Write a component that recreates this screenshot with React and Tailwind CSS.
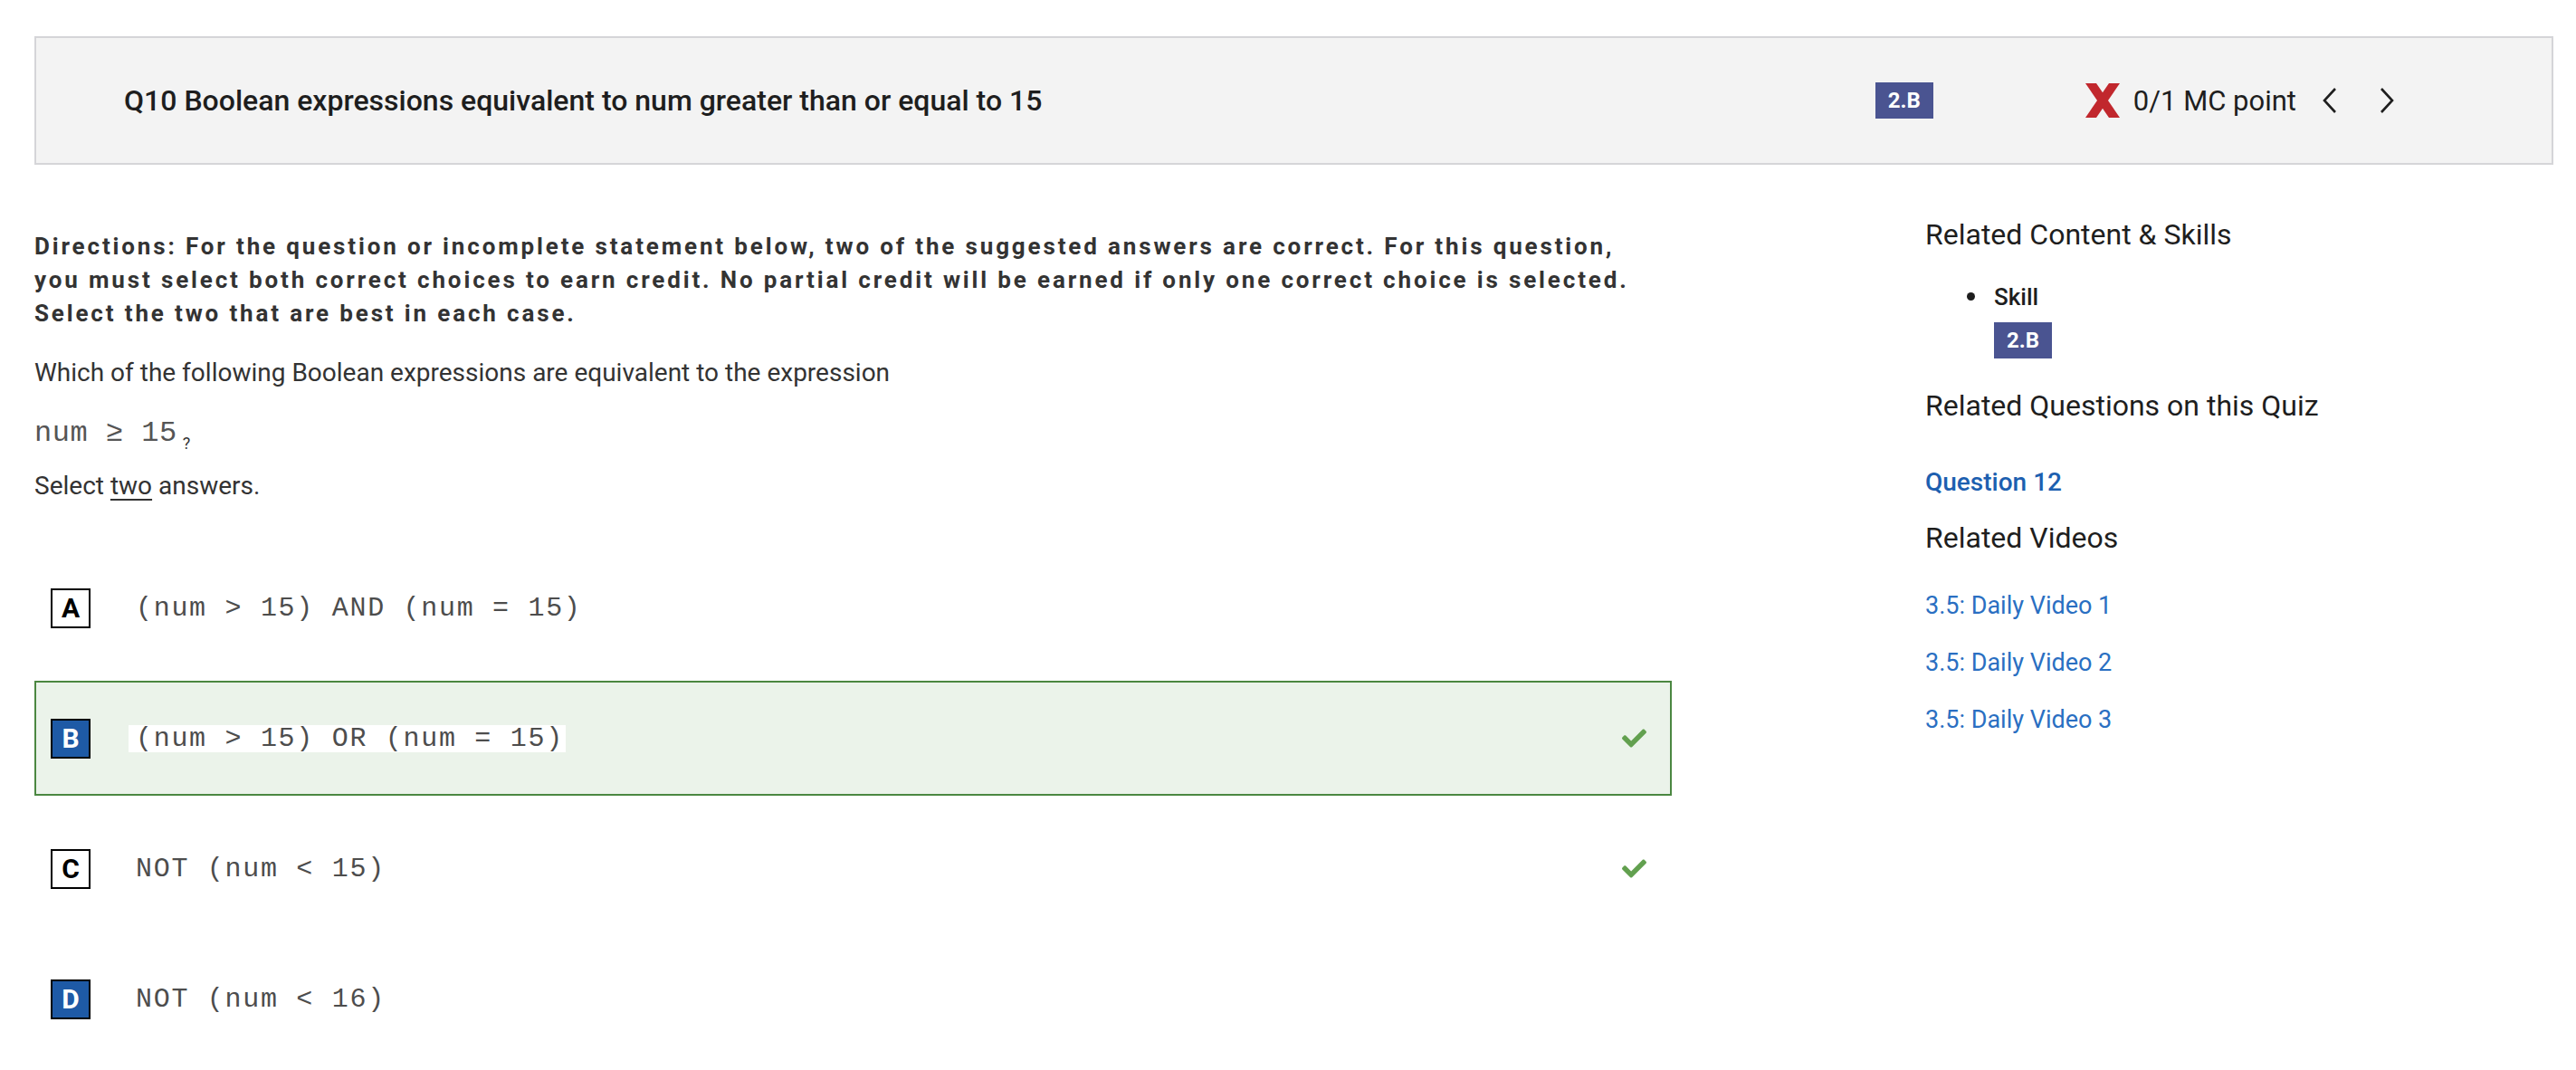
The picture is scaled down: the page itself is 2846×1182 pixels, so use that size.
import React from "react";
import { FaCheck } from "react-icons/fa";

function XMark() {
  return (
    <svg width="40" height="38" viewBox="0 0 40 38" aria-hidden="true">
      <polygon points="1,0 13,0 39,38 27,38" fill="#c1272d" />
      <polygon points="27,0 39,0 13,38 1,38" fill="#c1272d" />
    </svg>
  );
}

function Chevron({ left, className }) {
  return (
    <svg width="20" height="30" viewBox="0 0 20 30" className={className} aria-hidden="true">
      <polyline
        points={left ? "16,2 4,15 16,28" : "4,2 16,15 4,28"}
        fill="none"
        stroke="#1e1e1e"
        strokeWidth="2.6"
      />
    </svg>
  );
}

const options = [
  { letter: "A", text: "(num > 15) AND (num = 15)", filled: false, selected: false, check: false },
  { letter: "B", text: "(num > 15) OR (num = 15)", filled: true, selected: true, check: true },
  { letter: "C", text: "NOT (num < 15)", filled: false, selected: false, check: true },
  { letter: "D", text: "NOT (num < 16)", filled: true, selected: false, check: false },
];

function Option({ o }) {
  return (
    <div
      className={
        "flex h-[127px] items-center border-2 pl-[16px] pr-[26px] " +
        (o.selected ? "border-[#4b8741] bg-[#ebf3ea]" : "border-transparent bg-white")
      }
    >
      <span
        className={
          "flex h-[44px] w-[44px] shrink-0 items-center justify-center border-2 border-black text-[30px] font-bold leading-none " +
          (o.filled ? "bg-[#1e5aa6] text-white" : "bg-white text-black")
        }
      >
        {o.letter}
      </span>
      <span className="ml-[42px] whitespace-pre bg-white pl-[8px] pr-[2px] font-['Liberation_Mono',monospace] text-[30px] leading-[30px] tracking-[1.7px] text-[#4d4d4d]">
        {o.text}
      </span>
      <span className="flex-1" />
      {o.check && <FaCheck size={27} className="text-[#62a04f]" />}
    </div>
  );
}

export default function App() {
  return (
    <div className="min-h-[1182px] bg-white pl-[38px] pr-[25px] pt-[40px] font-[Roboto,sans-serif] text-[#222]">
      <header className="flex h-[142px] items-center border-2 border-[#d5d5d8] bg-[#f3f3f3] pl-[97px] pr-[172px]">
        <h1 className="flex-1 text-[32px] font-medium leading-none text-[#1e1e1e]">
          Q10 Boolean expressions equivalent to num greater than or equal to 15
        </h1>
        <span className="flex h-[40px] w-[64px] items-center justify-center bg-[#4a5491] text-[24px] font-bold leading-none text-white">
          2.B
        </span>
        <div className="ml-[167px] flex items-center">
          <XMark />
          <span className="ml-[14px] text-[31px] leading-none text-[#1e1e1e]">0/1 MC point</span>
          <Chevron left className="ml-[27px]" />
          <Chevron className="ml-[43px]" />
        </div>
      </header>

      <div className="flex">
        <main className="w-[1809px] shrink-0 pt-[72px]">
          <p className="whitespace-nowrap text-[26px] font-bold leading-[37px] tracking-[2.85px] text-[#333]">
            Directions: For the question or incomplete statement below, two of the suggested answers are correct. For this question,
            <br />
            you must select both correct choices to earn credit. No partial credit will be earned if only one correct choice is selected.
            <br />
            Select the two that are best in each case.
          </p>
          <p className="mt-[31px] text-[28px] leading-[32px] text-[#333]">
            Which of the following Boolean expressions are equivalent to the expression
          </p>
          <div className="mt-[31px] h-[40px] leading-[40px]">
            <span className="bg-white font-['Liberation_Mono',monospace] text-[32px] tracking-[0.5px] text-[#555]">num ≥ 15</span>
            <span className="ml-[6px] align-[-9px] text-[18px] text-[#333]">?</span>
          </div>
          <p className="mt-[22px] text-[28px] leading-[32px] text-[#333]">
            Select <span className="underline underline-offset-[5px]">two</span> answers.
          </p>
          <div className="mt-[55px] flex flex-col gap-[17px]">
            {options.map((o) => (
              <Option key={o.letter} o={o} />
            ))}
          </div>
        </main>

        <aside className="ml-[280px] flex-1 pt-[59px]">
          <h2 className="text-[32px] leading-[36px] text-[#1e1e1e]">Related Content &amp; Skills</h2>
          <ul className="mt-[35px]">
            <li className="flex">
              <span className="ml-[46px] mt-[11px] h-[9px] w-[9px] shrink-0 rounded-full bg-[#1e1e1e]" />
              <div className="ml-[21px]">
                <div className="text-[26px] font-medium leading-[32px] text-[#1e1e1e]">Skill</div>
                <span className="mt-[12px] flex h-[40px] w-[64px] items-center justify-center bg-[#4a5491] text-[24px] font-bold leading-none text-white">
                  2.B
                </span>
              </div>
            </li>
          </ul>
          <h2 className="mt-[34px] text-[32px] leading-[36px] text-[#1e1e1e]">Related Questions on this Quiz</h2>
          <a className="mt-[51px] block text-[28px] font-medium leading-[32px] text-[#1d5fb0]">Question 12</a>
          <h2 className="mt-[27px] text-[32px] leading-[36px] text-[#1e1e1e]">Related Videos</h2>
          <div className="mt-[41px] flex flex-col gap-[31px]">
            <a className="block text-[27px] leading-[32px] text-[#2a6fc2]">3.5: Daily Video 1</a>
            <a className="block text-[27px] leading-[32px] text-[#2a6fc2]">3.5: Daily Video 2</a>
            <a className="block text-[27px] leading-[32px] text-[#2a6fc2]">3.5: Daily Video 3</a>
          </div>
        </aside>
      </div>
    </div>
  );
}
